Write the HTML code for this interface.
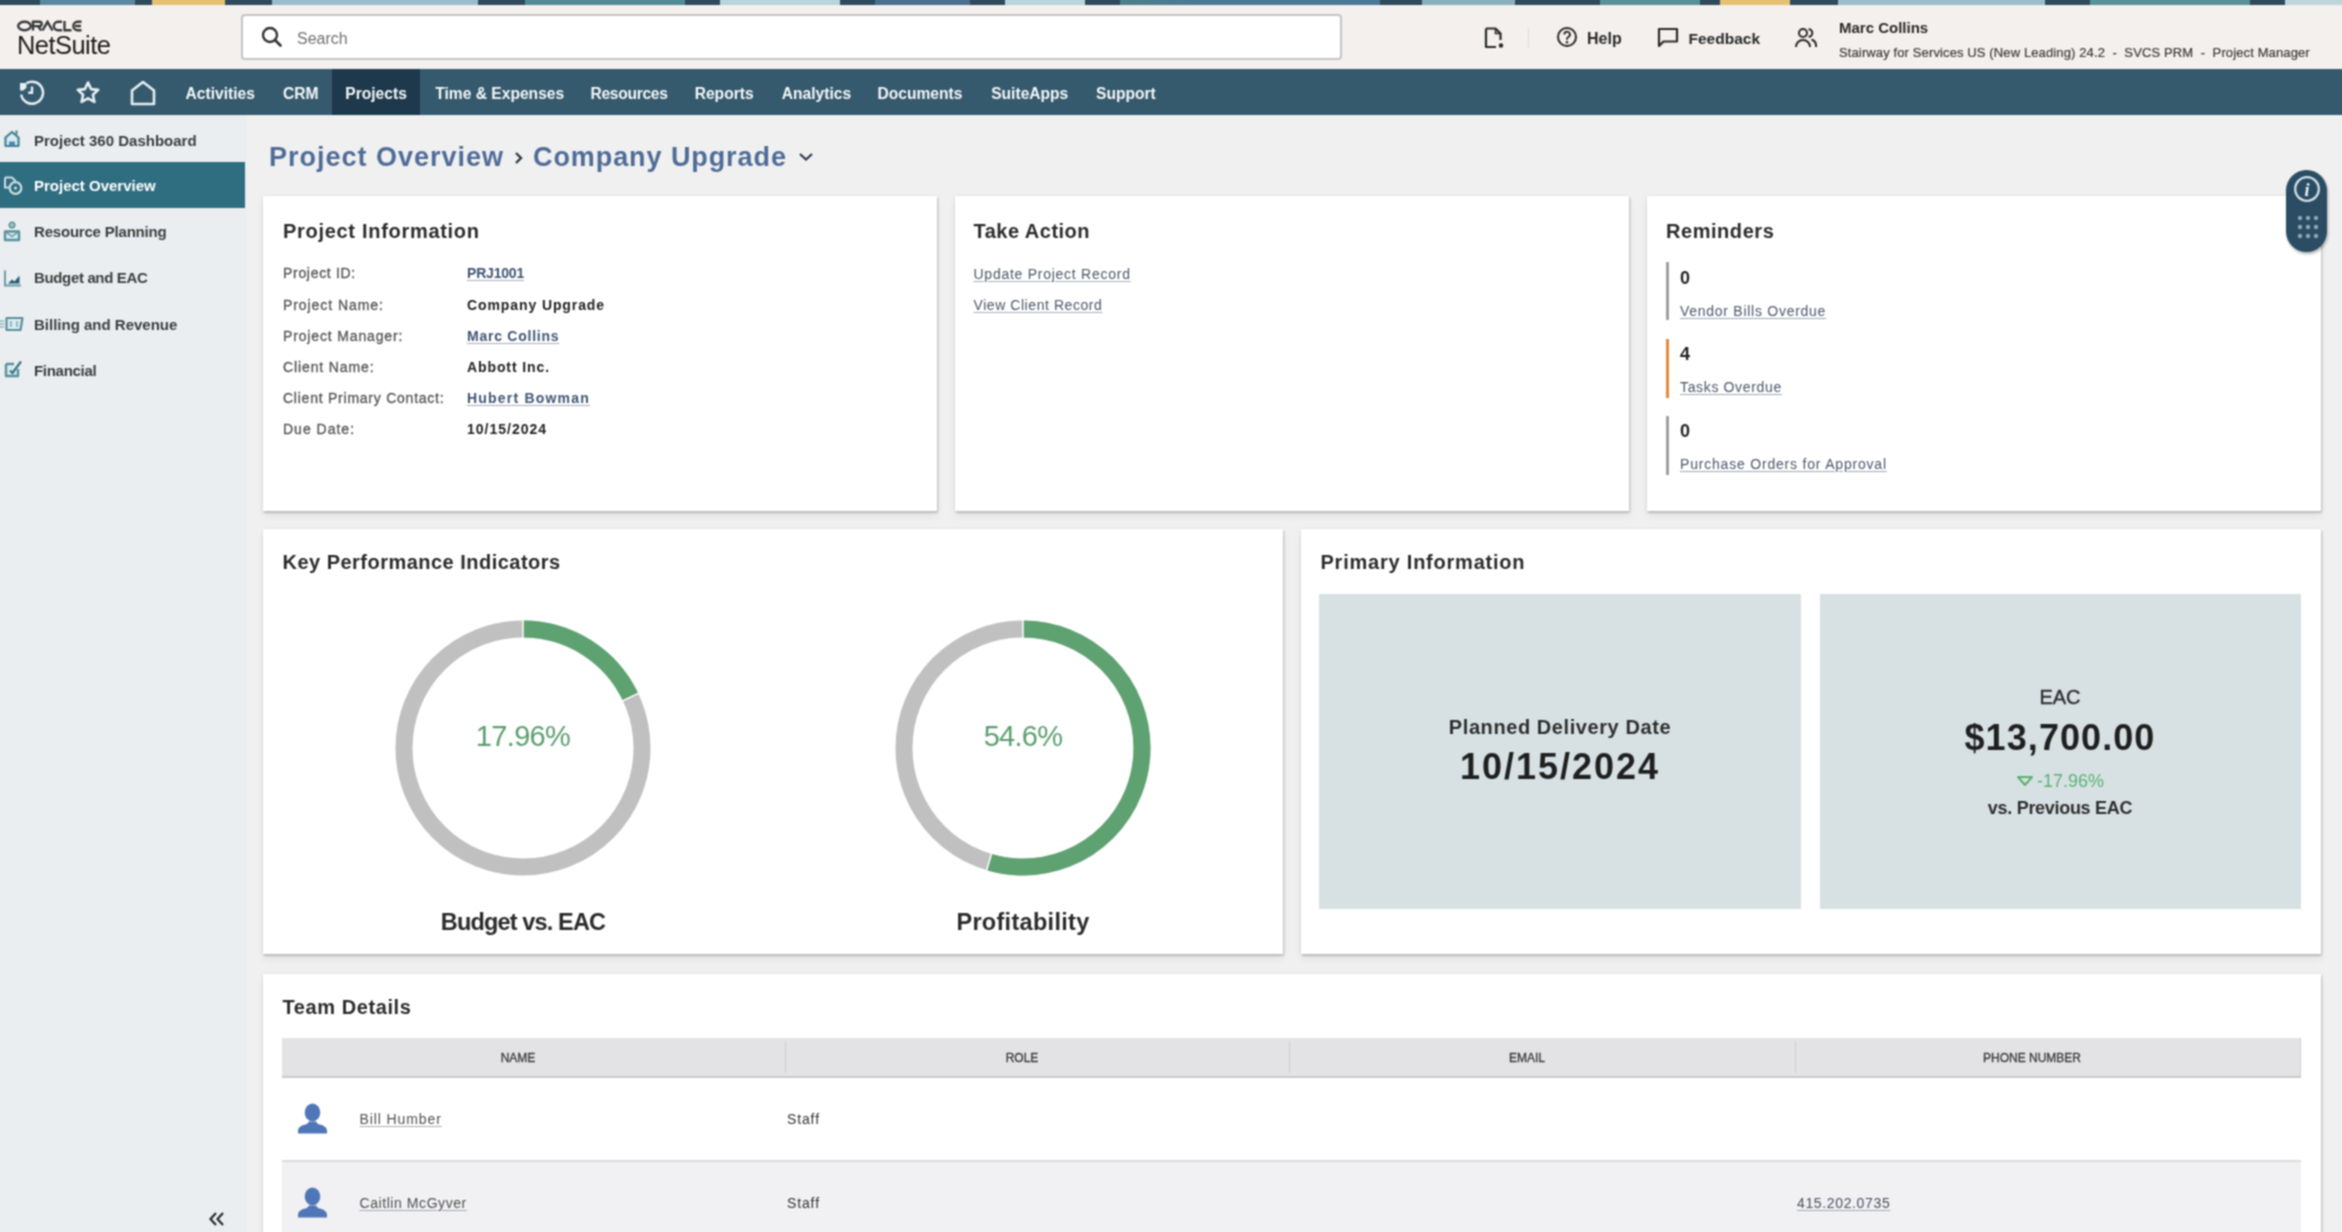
<!DOCTYPE html>
<html><head><meta charset="utf-8">
<style>
*{box-sizing:border-box;margin:0;padding:0}
html,body{width:2342px;height:1232px;overflow:hidden;background:#f0f0f0;font-family:"Liberation Sans",sans-serif;color:#333}
.abs{position:absolute}
#root{position:absolute;left:0;top:0;width:2342px;height:1232px;overflow:hidden;background:#f0f0f0;filter:url(#sb)}
#strip{position:absolute;left:0;top:0;width:2342px;height:5px;
background:linear-gradient(90deg,#2e4a5c 0,#2e4a5c 40px,#5b8aa0 40px,#5b8aa0 135px,#2e4a5c 135px,#2e4a5c 152px,#e6c173 152px,#e6c173 225px,#2e4a5c 225px,#2e4a5c 272px,#9bbccc 272px,#9bbccc 478px,#2e4a5c 478px,#2e4a5c 525px,#508c95 525px,#508c95 685px,#2e4a5c 685px,#2e4a5c 720px,#b8d4dc 720px,#b8d4dc 840px,#2e4a5c 840px,#2e4a5c 875px,#4a7090 875px,#4a7090 970px,#2e4a5c 970px,#2e4a5c 1005px,#b8d4dc 1005px,#b8d4dc 1085px,#2e4a5c 1085px,#2e4a5c 1120px,#4a8088 1120px,#4a7a95 1200px,#4a7a95 1380px,#2e4a5c 1380px,#2e4a5c 1422px,#8ab0c0 1422px,#8ab0c0 1515px,#2e4a5c 1515px,#2e4a5c 1600px,#5a9098 1600px,#5a9098 1700px,#2e4a5c 1700px,#2e4a5c 1720px,#e6c173 1720px,#e6c173 1790px,#2e4a5c 1790px,#2e4a5c 1838px,#9bbccc 1838px,#9bbccc 2045px,#2e4a5c 2045px,#2e4a5c 2090px,#5a9098 2090px,#5a9098 2250px,#2e4a5c 2250px,#2e4a5c 2285px,#c0d4dc 2285px)}
#header{position:absolute;left:0;top:5px;width:2342px;height:64px;background:#f3f0ee}
#nav{position:absolute;left:0;top:69px;width:2342px;height:46px;background:#355a6d}
#side{position:absolute;left:0;top:115px;width:247px;height:1117px;background:#eaeef0}
.card{position:absolute;background:#fff;box-shadow:0 0 3px rgba(0,0,0,0.09),1px 2px 2px rgba(0,0,0,0.17),0 5px 8px rgba(0,0,0,0.06)}

.t{position:absolute;line-height:1;white-space:nowrap}
.b{font-weight:bold}
.nv{position:absolute;line-height:1;white-space:nowrap;color:#f4f7f9;font-weight:bold;font-size:15.6px;top:86.3px}
.si{position:absolute;line-height:1;white-space:nowrap;color:#3c3c3c;font-weight:bold;font-size:15px;left:34px}

.ttl{position:absolute;line-height:1;white-space:nowrap;color:#2b2b2b;font-weight:bold;font-size:20px}
.lb{position:absolute;line-height:1;white-space:nowrap;color:#555;font-size:14px;left:283px;-webkit-text-stroke:0.3px #555}
.vl{position:absolute;line-height:1;white-space:nowrap;color:#222;font-weight:bold;font-size:14px;left:467px}
.lk{color:#3f5574;text-decoration:underline;text-decoration-color:#a6adb8;text-underline-offset:2px}
.rl{position:absolute;line-height:1;white-space:nowrap;font-size:14px;left:1680px;color:#4a5668;text-decoration:underline;text-decoration-color:#9aa8b8;text-underline-offset:2px}
.rn{position:absolute;line-height:1;white-space:nowrap;font-size:18px;font-weight:bold;left:1680px;color:#222}
.rb{position:absolute;left:1666px;width:3px;background:#a0a0a0}
.th{position:absolute;line-height:1;white-space:nowrap;font-size:12px;color:#3a3a3a;top:1052px;text-align:center;width:200px;-webkit-text-stroke:0.3px #3a3a3a}
</style></head>
<body>
<svg width="0" height="0" style="position:absolute"><filter id="sb" color-interpolation-filters="sRGB" x="0" y="0" width="100%" height="100%"><feConvolveMatrix order="3" kernelMatrix="1 2 1 2 4 2 1 2 1" divisor="16" edgeMode="duplicate"/></filter></svg>
<div id="root">
<div id="strip"></div>
<div id="header"></div>
<div id="nav"></div>
<div id="side"></div>
<div class="card" style="left:263px;top:196px;width:674px;height:315px"></div>
<div class="card" style="left:955px;top:196px;width:674px;height:315px"></div>
<div class="card" style="left:1647px;top:196px;width:674px;height:315px"></div>
<div class="card" style="left:263px;top:529px;width:1020px;height:425px"></div>
<div class="card" style="left:1301px;top:529px;width:1020px;height:425px"></div>
<div class="card" style="left:263px;top:974px;width:2058px;height:300px"></div>

<!-- header -->
<svg class="abs" style="left:17px;top:20px" width="66" height="12" viewBox="0 0 66 12">
 <g fill="none" stroke="#3a3a3a" stroke-width="2.4">
  <ellipse cx="7.5" cy="6" rx="6.3" ry="4.2"/>
  <path d="M16 10.5V1.8h6.5a2.1 2.1 0 0 1 0 4.3H16M21 6.1l3.2 4.4"/>
  <path d="M25.5 10.5L30.5 1.8L35.5 10.5"/>
  <path d="M45 1.8h-4a4.2 4.2 0 0 0 0 8.4h4"/>
  <path d="M47.5 1V10.2h7"/>
  <path d="M64.5 1.8h-4a4.2 4.2 0 0 0 0 8.4h4M58 6h6"/>
 </g>
</svg>
<div class="t" id="logo" style="left:17px;top:33px;font-size:25.5px;color:#1e1e1e;letter-spacing:-0.55px">NetSuite</div>
<div class="abs" style="left:241px;top:14px;width:1101px;height:46px;border:2px solid #c6c4c4;border-radius:4px;background:#fff"></div>
<svg class="abs" style="left:258px;top:24px" width="28" height="26" viewBox="0 0 28 26">
 <circle cx="12" cy="11" r="7" fill="none" stroke="#333" stroke-width="2.4"/>
 <path d="M17 16l5.5 5.5" stroke="#333" stroke-width="2.6" stroke-linecap="round"/>
</svg>
<div class="t" id="search" style="left:297px;top:31px;font-size:16px;color:#707070">Search</div>
<svg class="abs" style="left:1483px;top:26px" width="24" height="24" viewBox="0 0 24 24">
 <path d="M3 2.5h9.5l5 5V14M3 2.5V21h10" fill="none" stroke="#2a2a2a" stroke-width="2.2" stroke-linejoin="round"/>
 <path d="M12.5 2.5v5h5" fill="none" stroke="#2a2a2a" stroke-width="1.6"/>
 <circle cx="18" cy="19.5" r="2.2" fill="#2a2a2a"/>
</svg>
<div class="abs" style="left:1528px;top:28px;width:1px;height:20px;background:#dedcdc"></div>
<svg class="abs" style="left:1555px;top:25px" width="24" height="24" viewBox="0 0 24 24">
 <circle cx="12" cy="12" r="9" fill="none" stroke="#2a2a2a" stroke-width="2"/>
 <path d="M9.3 9.5a2.8 2.8 0 1 1 4 2.5c-.9.5-1.3 1-1.3 2v.8" fill="none" stroke="#2a2a2a" stroke-width="1.9"/>
 <circle cx="12" cy="17.3" r="1.2" fill="#2a2a2a"/>
</svg>
<div class="t b" id="help" style="left:1587px;top:30.5px;font-size:16px;color:#2a2a2a">Help</div>
<svg class="abs" style="left:1656px;top:26px" width="24" height="22" viewBox="0 0 24 22">
 <path d="M3 3h18v12.5H7.5L3 20z" fill="none" stroke="#2a2a2a" stroke-width="2.2" stroke-linejoin="round"/>
</svg>
<div class="t b" id="feedback" style="left:1688.5px;top:30.5px;font-size:15.5px;color:#2a2a2a">Feedback</div>
<svg class="abs" style="left:1794px;top:26px" width="24" height="23" viewBox="0 0 24 23">
 <circle cx="9" cy="7" r="4" fill="none" stroke="#2a2a2a" stroke-width="2"/>
 <path d="M2 21a7 7 0 0 1 14 0" fill="none" stroke="#2a2a2a" stroke-width="2"/>
 <path d="M14.5 3.2a3.8 3.8 0 0 1 0 7.6M17.5 13.5a7 7 0 0 1 4.5 7.5" fill="none" stroke="#2a2a2a" stroke-width="2"/>
</svg>
<div class="t b" id="uname" style="left:1839px;top:20.3px;font-size:15px;color:#2a2a2a">Marc Collins</div>
<div class="t" id="usub" style="letter-spacing:0.12px;left:1839px;top:46px;font-size:13px;color:#3c3c3c;-webkit-text-stroke:0.2px #3c3c3c">Stairway for Services US (New Leading) 24.2 &nbsp;-&nbsp; SVCS PRM &nbsp;-&nbsp; Project Manager</div>

<!-- nav -->
<div class="abs" style="left:332px;top:69px;width:88px;height:46px;background:#1d394b"></div>
<svg class="abs" style="left:17px;top:78px" width="30" height="30" viewBox="0 0 30 30">
 <path d="M4.2 16.6A11 11 0 1 0 9.5 5.2" fill="none" stroke="#e6eef2" stroke-width="2.5"/>
 <path d="M3 5h6.5v4.5l-3 3h-3.5z" fill="#e6eef2"/>
 <path d="M15 8.5v6.3h-3.8" fill="none" stroke="#e6eef2" stroke-width="2.4"/>
</svg>
<svg class="abs" style="left:74px;top:79px" width="28" height="28" viewBox="0 0 28 28">
 <path d="M14 3.5l3.1 6.6 7.1.8-5.3 4.9 1.5 7.1L14 19.3l-6.4 3.6 1.5-7.1-5.3-4.9 7.1-.8z" fill="none" stroke="#e6eef2" stroke-width="2.6" stroke-linejoin="round"/>
</svg>
<svg class="abs" style="left:128px;top:78px" width="30" height="30" viewBox="0 0 30 30">
 <path d="M4 12.5L15 4l11 8.5V26H4z" fill="none" stroke="#e6eef2" stroke-width="2.6" stroke-linejoin="round"/>
</svg>
<div class="nv" id="n1" style="left:185.5px">Activities</div>
<div class="nv" id="n2" style="left:283px">CRM</div>
<div class="nv" id="n3" style="left:345.3px">Projects</div>
<div class="nv" id="n4" style="left:435.3px">Time &amp; Expenses</div>
<div class="nv" id="n5" style="letter-spacing:-0.3px;left:590.5px">Resources</div>
<div class="nv" id="n6" style="left:694.7px">Reports</div>
<div class="nv" id="n7" style="left:781.8px">Analytics</div>
<div class="nv" id="n8" style="left:877.5px">Documents</div>
<div class="nv" id="n9" style="left:991.2px">SuiteApps</div>
<div class="nv" id="n10" style="left:1096px">Support</div>

<!-- sidebar -->
<div class="abs" style="left:0;top:162px;width:245px;height:46px;background:#2f6e80"></div>

<svg class="abs" style="left:3px;top:129px" width="18" height="19" viewBox="0 0 18 19">
 <path d="M2.5 8.5L9 3l6.5 5.5V17h-13z" fill="#d6ecf0" stroke="#447f8e" stroke-width="2.2" stroke-linejoin="round"/>
 <path d="M6 16.5v-4h6v4z" fill="#4f86b0"/>
 <path d="M13.5 1.5v4" stroke="#447f8e" stroke-width="2"/>
</svg>
<svg class="abs" style="left:3px;top:175px" width="20" height="21" viewBox="0 0 20 21">
 <path d="M2 2.5h7l3 3v3" fill="none" stroke="#c9dde2" stroke-width="2"/>
 <path d="M2 2.5v10h4" fill="none" stroke="#c9dde2" stroke-width="2"/>
 <circle cx="12.5" cy="13" r="5.8" fill="#2f6e80" stroke="#c9dde2" stroke-width="2.2"/>
 <circle cx="12.5" cy="13" r="1.6" fill="#c9dde2"/>
</svg>
<svg class="abs" style="left:3px;top:221px" width="18" height="21" viewBox="0 0 18 21">
 <circle cx="9" cy="4" r="2.8" fill="#9fc4cc" stroke="#5b8f9b" stroke-width="1.4"/>
 <path d="M2 19V10.5h14V19z" fill="#d6ecf0" stroke="#5b8f9b" stroke-width="2.4" stroke-linejoin="round"/>
 <path d="M4 12l5 3.5 5-3.5" fill="none" stroke="#5b8f9b" stroke-width="1.4"/>
</svg>
<svg class="abs" style="left:3px;top:269px" width="19" height="19" viewBox="0 0 19 19">
 <path d="M2 1.5V16.5h16" fill="none" stroke="#6b9ba6" stroke-width="2"/>
 <path d="M5 14.5l4-4 2.5 2 5-6V14.5z" fill="#245d75"/>
</svg>
<svg class="abs" style="left:0px;top:316px" width="25" height="16" viewBox="0 0 25 16">
 <path d="M0 5h4M0 8h4M0 11h4" stroke="#8fb7c0" stroke-width="1.5"/>
 <path d="M6.5 2h16l-2 12h-14z" fill="#d6ecf0" stroke="#5b8f9b" stroke-width="2.2" stroke-linejoin="round"/>
 <path d="M11 5v6M17 5v6" stroke="#7aa6b0" stroke-width="1.4"/>
</svg>
<svg class="abs" style="left:3px;top:359px" width="20" height="20" viewBox="0 0 20 20">
 <path d="M3 5h8M3 5v12h12v-7" fill="#d6ecf0" stroke="#5b8f9b" stroke-width="2.4" stroke-linejoin="round"/>
 <path d="M7 11.5l2.5 2.5L18 2.5" fill="none" stroke="#3d7382" stroke-width="2.2"/>
</svg>
<div class="si" id="s1" style="top:132.6px">Project 360 Dashboard</div>
<div class="si" id="s2" style="top:177.5px;color:#fff">Project Overview</div>
<div class="si" id="s3" style="letter-spacing:-0.2px;top:223.9px">Resource Planning</div>
<div class="si" id="s4" style="letter-spacing:-0.35px;top:270.2px">Budget and EAC</div>
<div class="si" id="s5" style="top:316.5px">Billing and Revenue</div>
<div class="si" id="s6" style="letter-spacing:-0.3px;top:362.8px">Financial</div>

<!-- breadcrumb -->
<div class="t b" id="bc1" style="letter-spacing:1.00px;left:269px;top:144px;font-size:27px;color:#4f6c97">Project Overview</div>
<svg class="abs" style="left:513px;top:150px" width="12" height="16" viewBox="0 0 12 16"><path d="M3 3l5 5-5 5" fill="none" stroke="#2d3a48" stroke-width="2.4"/></svg>
<div class="t b" id="bc2" style="letter-spacing:0.92px;left:533px;top:144px;font-size:27px;color:#4f6c97">Company Upgrade</div>
<svg class="abs" style="left:797px;top:150px" width="18" height="14" viewBox="0 0 18 14"><path d="M3 4l6 5.5L15 4" fill="none" stroke="#2d3a48" stroke-width="2.2"/></svg>

<!-- card 1 -->
<div class="ttl" id="c1t" style="letter-spacing:0.70px;left:283px;top:221px">Project Information</div>
<div class="lb" id="l1" style="letter-spacing:0.69px;top:266.4px">Project ID:</div>
<div class="lb" id="l2" style="letter-spacing:0.93px;top:297.6px">Project Name:</div>
<div class="lb" id="l3" style="letter-spacing:0.85px;top:328.8px">Project Manager:</div>
<div class="lb" id="l4" style="letter-spacing:0.88px;top:360px">Client Name:</div>
<div class="lb" id="l5" style="letter-spacing:0.76px;top:391.2px">Client Primary Contact:</div>
<div class="lb" id="l6" style="letter-spacing:1.00px;top:422.4px">Due Date:</div>
<div class="vl lk" id="v1" style="letter-spacing:-0.20px;top:266.4px">PRJ1001</div>
<div class="vl" id="v2" style="letter-spacing:0.90px;top:297.6px">Company Upgrade</div>
<div class="vl lk" id="v3" style="letter-spacing:0.76px;top:328.8px">Marc Collins</div>
<div class="vl" id="v4" style="letter-spacing:0.90px;top:360px">Abbott Inc.</div>
<div class="vl lk" id="v5" style="letter-spacing:1.20px;top:391.2px">Hubert Bowman</div>
<div class="vl" id="v6" style="letter-spacing:1.00px;top:422.4px">10/15/2024</div>

<!-- card 2 -->
<div class="ttl" id="c2t" style="letter-spacing:0.49px;left:973.5px;top:221px">Take Action</div>
<div class="t lk" id="a1" style="color:#4a5668;letter-spacing:0.74px;left:973.5px;top:267px;font-size:14px">Update Project Record</div>
<div class="t lk" id="a2" style="color:#4a5668;letter-spacing:0.56px;left:973.5px;top:297.7px;font-size:14px">View Client Record</div>

<!-- card 3 -->
<div class="ttl" id="c3t" style="letter-spacing:0.55px;left:1666px;top:221px">Reminders</div>
<div class="rb" style="top:262px;height:58px"></div>
<div class="rn" id="r1" style="top:268.6px">0</div>
<div class="rl" id="rl1" style="letter-spacing:0.73px;top:303.7px">Vendor Bills Overdue</div>
<div class="rb" style="top:339px;height:59px;background:#e8883a"></div>
<div class="rn" id="r2" style="top:344.6px">4</div>
<div class="rl" id="rl2" style="letter-spacing:0.65px;top:380.3px">Tasks Overdue</div>
<div class="rb" style="top:416px;height:59px"></div>
<div class="rn" id="r3" style="top:422.1px">0</div>
<div class="rl" id="rl3" style="letter-spacing:0.80px;top:457.2px">Purchase Orders for Approval</div>

<!-- info button -->
<div class="abs" style="left:2286px;top:170px;width:41px;height:82px;border-radius:21px;background:#2a4d64;box-shadow:1px 2px 3px rgba(0,0,0,0.3)"></div>
<svg class="abs" style="left:2293px;top:175px" width="28" height="28" viewBox="0 0 28 28">
 <circle cx="14" cy="14" r="11.8" fill="none" stroke="#d3e0e7" stroke-width="2.3"/>
 <text x="14" y="21" text-anchor="middle" font-family="Liberation Serif" font-weight="bold" font-style="italic" font-size="18" fill="#eef3f6">i</text>
</svg>
<svg class="abs" style="left:2295px;top:213px" width="26" height="28" viewBox="0 0 26 28">
 <g fill="#8fa7b6"><circle cx="5" cy="5" r="2.2"/><circle cx="13" cy="5" r="2.2"/><circle cx="21" cy="5" r="2.2"/>
 <circle cx="5" cy="14" r="2.2"/><circle cx="13" cy="14" r="2.2"/><circle cx="21" cy="14" r="2.2"/>
 <circle cx="5" cy="23" r="2.2"/><circle cx="13" cy="23" r="2.2"/><circle cx="21" cy="23" r="2.2"/></g>
</svg>

<!-- KPI -->
<div class="ttl" id="c4t" style="letter-spacing:0.48px;left:282.5px;top:552px">Key Performance Indicators</div>
<svg class="abs" style="left:392px;top:617px" width="262" height="262" viewBox="0 0 262 262">
 <circle cx="131" cy="131" r="119" fill="none" stroke="#c0c0c0" stroke-width="17"/>
 <circle cx="131" cy="131" r="119" fill="none" stroke="#5ea271" stroke-width="17" stroke-dasharray="134.3 1000" transform="rotate(-90 131 131)"/>
 <line x1="131" y1="0" x2="131" y2="24" stroke="#fff" stroke-width="1.5"/>
 <line x1="131" y1="131" x2="131" y2="0" stroke="#fff" stroke-width="1.5" transform="rotate(64.66 131 131)" stroke-dasharray="0 100 40"/>
</svg>
<div class="t" id="k1" style="letter-spacing:-0.64px;left:423px;top:722px;width:200px;text-align:center;font-size:29px;color:#5b9e6f">17.96%</div>
<div class="t b" id="k1l" style="letter-spacing:-0.85px;left:373px;top:910.5px;width:300px;text-align:center;font-size:23.5px;color:#2b2b2b">Budget vs. EAC</div>
<svg class="abs" style="left:892px;top:617px" width="262" height="262" viewBox="0 0 262 262">
 <circle cx="131" cy="131" r="119" fill="none" stroke="#c0c0c0" stroke-width="17"/>
 <circle cx="131" cy="131" r="119" fill="none" stroke="#5ea271" stroke-width="17" stroke-dasharray="408.2 1000" transform="rotate(-90 131 131)"/>
 <line x1="131" y1="0" x2="131" y2="24" stroke="#fff" stroke-width="1.5"/>
 <line x1="131" y1="131" x2="131" y2="0" stroke="#fff" stroke-width="1.5" transform="rotate(196.56 131 131)" stroke-dasharray="0 100 40"/>
</svg>
<div class="t" id="k2" style="letter-spacing:-0.70px;left:923px;top:722px;width:200px;text-align:center;font-size:29px;color:#5b9e6f">54.6%</div>
<div class="t b" id="k2l" style="letter-spacing:0.3px;left:873px;top:910.5px;width:300px;text-align:center;font-size:23.5px;color:#2b2b2b">Profitability</div>

<!-- Primary -->
<div class="ttl" id="c5t" style="letter-spacing:0.78px;left:1320.5px;top:552px">Primary Information</div>
<div class="abs" style="left:1319px;top:594px;width:482px;height:315px;background:#d7e1e4"></div>
<div class="abs" style="left:1820px;top:594px;width:481px;height:315px;background:#d7e1e4"></div>
<div class="t b" id="p1" style="letter-spacing:0.58px;left:1360px;top:717px;width:400px;text-align:center;font-size:20px;color:#2e2e2e">Planned Delivery Date</div>
<div class="t b" id="p2" style="letter-spacing:2.00px;left:1360px;top:749px;width:400px;text-align:center;font-size:36px;color:#1f1f1f">10/15/2024</div>
<div class="t b" id="p3" style="left:1860px;top:687px;width:400px;text-align:center;font-size:20px;color:#2e2e2e;font-weight:normal;-webkit-text-stroke:0.4px #2e2e2e">EAC</div>
<div class="t b" id="p4" style="letter-spacing:1.08px;left:1860px;top:719.8px;width:400px;text-align:center;font-size:36px;color:#1f1f1f">$13,700.00</div>
<div class="t" id="p5" style="left:1860px;top:772px;width:400px;text-align:center;font-size:18px;color:#5cb071"><svg width="18" height="12" viewBox="0 0 18 12" style="vertical-align:0px;margin-right:3px"><path d="M2 2h14L9 10z" fill="none" stroke="#5cb071" stroke-width="2" stroke-linejoin="round"/></svg>-17.96%</div>
<div class="t b" id="p6" style="letter-spacing:-0.30px;left:1860px;top:799.2px;width:400px;text-align:center;font-size:18px;color:#2e2e2e">vs. Previous EAC</div>

<!-- Team -->
<div class="ttl" id="c6t" style="letter-spacing:0.59px;left:282.5px;top:997px">Team Details</div>
<div class="abs" style="left:282px;top:1038px;width:2019px;height:40px;background:#e3e3e5;border-bottom:2px solid #c9c9cb;border-right:1px solid #d0d0d0"></div>
<div class="abs" style="left:785px;top:1041px;width:1px;height:32px;background:#cfcfd1"></div>
<div class="abs" style="left:1289px;top:1041px;width:1px;height:32px;background:#cfcfd1"></div>
<div class="abs" style="left:1795px;top:1041px;width:1px;height:32px;background:#cfcfd1"></div>
<div class="th" style="left:418px">NAME</div>
<div class="th" style="left:922px">ROLE</div>
<div class="th" style="left:1427px">EMAIL</div>
<div class="th" style="left:1932px">PHONE NUMBER</div>
<div class="abs" style="left:282px;top:1160px;width:2019px;height:80px;background:#f1f0f2;border-top:2px solid #dcdcde"></div>
<svg class="abs" style="left:296px;top:1101px" width="34" height="34" viewBox="0 0 34 34">
 <ellipse cx="16.5" cy="11.5" rx="7.8" ry="9" fill="#4f77b8"/><path d="M2 32.5v-2.5c0-4 4-6 9-7l2-2.5h7l2 2.5c5 1 9 3 9 7v2.5z" fill="#4f77b8"/>
</svg>
<div class="t lk" id="tm1" style="color:#505050;letter-spacing:0.90px;left:359.5px;top:1112px;font-size:14px">Bill Humber</div>
<div class="t" id="tr1" style="letter-spacing:0.87px;left:787px;top:1112px;font-size:14px;color:#333">Staff</div>
<svg class="abs" style="left:296px;top:1185px" width="34" height="34" viewBox="0 0 34 34">
 <ellipse cx="16.5" cy="11.5" rx="7.8" ry="9" fill="#4f77b8"/><path d="M2 32.5v-2.5c0-4 4-6 9-7l2-2.5h7l2 2.5c5 1 9 3 9 7v2.5z" fill="#4f77b8"/>
</svg>
<div class="t lk" id="tm2" style="color:#505050;letter-spacing:0.57px;left:359.5px;top:1196px;font-size:14px">Caitlin McGyver</div>
<div class="t" id="tr2" style="letter-spacing:0.87px;left:787px;top:1196px;font-size:14px;color:#333">Staff</div>
<div class="t lk" id="tp2" style="color:#4a5060;letter-spacing:0.64px;left:1797px;top:1196px;font-size:14px">415.202.0735</div>
<svg class="abs" id="coll" style="left:207px;top:1210px" width="20" height="18" viewBox="0 0 20 18"><path d="M9 3L3.5 9 9 15M16 3l-5.5 6 5.5 6" fill="none" stroke="#2a2a2a" stroke-width="2.2"/></svg>
</div>
</body></html>
